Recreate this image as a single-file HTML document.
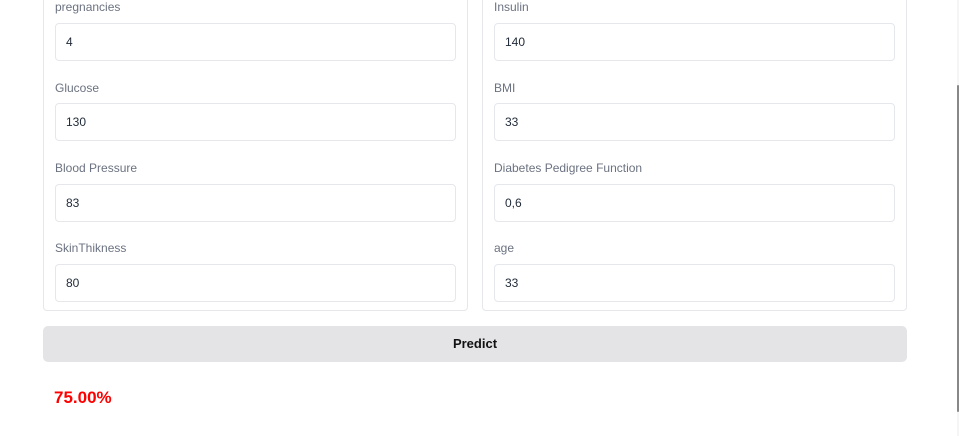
<!DOCTYPE html>
<html><head><style>
body{margin:0;width:959px;height:436px;background:#fff;font-family:"Liberation Sans",sans-serif;position:relative;overflow:hidden}
.panel{position:absolute;top:-10px;height:321px;border:1px solid #e5e7eb;border-radius:0 0 4px 4px;box-sizing:border-box}
.lbl{position:absolute;font-size:12px;color:#6b7280}
.inp{position:absolute;width:401px;height:38px;border:1px solid #e5e7eb;border-radius:4px;box-sizing:border-box;font-size:12px;color:#1f2937;padding-left:10px;line-height:36px}
</style></head><body>
<div class="panel" style="left:43px;width:425px"></div>
<div class="panel" style="left:482px;width:425px"></div>

<div class="lbl" style="left:55px;top:0px">pregnancies</div>
<div class="inp" style="left:55px;top:23px">4</div>
<div class="lbl" style="left:55px;top:81px">Glucose</div>
<div class="inp" style="left:55px;top:103px">130</div>
<div class="lbl" style="left:55px;top:161px">Blood Pressure</div>
<div class="inp" style="left:55px;top:184px">83</div>
<div class="lbl" style="left:55px;top:241px">SkinThikness</div>
<div class="inp" style="left:55px;top:264px">80</div>

<div class="lbl" style="left:494px;top:0px">Insulin</div>
<div class="inp" style="left:494px;top:23px">140</div>
<div class="lbl" style="left:494px;top:81px">BMI</div>
<div class="inp" style="left:494px;top:103px">33</div>
<div class="lbl" style="left:494px;top:161px">Diabetes Pedigree Function</div>
<div class="inp" style="left:494px;top:184px">0,6</div>
<div class="lbl" style="left:494px;top:241px">age</div>
<div class="inp" style="left:494px;top:264px">33</div>

<div style="position:absolute;left:43px;top:326px;width:864px;height:36px;background:#e4e4e7;border-radius:5px;text-align:center;line-height:36px;font-size:13px;font-weight:bold;color:#111">Predict</div>
<div style="position:absolute;left:54px;top:388px;font-size:17px;font-weight:bold;color:#f00">75.00%</div>

<div style="position:absolute;left:957px;top:0;width:2px;height:436px;background:#f5f5f5"></div>
<div style="position:absolute;left:957px;top:85px;width:2px;height:327px;background:#888;border-radius:1px"></div>
</body></html>
